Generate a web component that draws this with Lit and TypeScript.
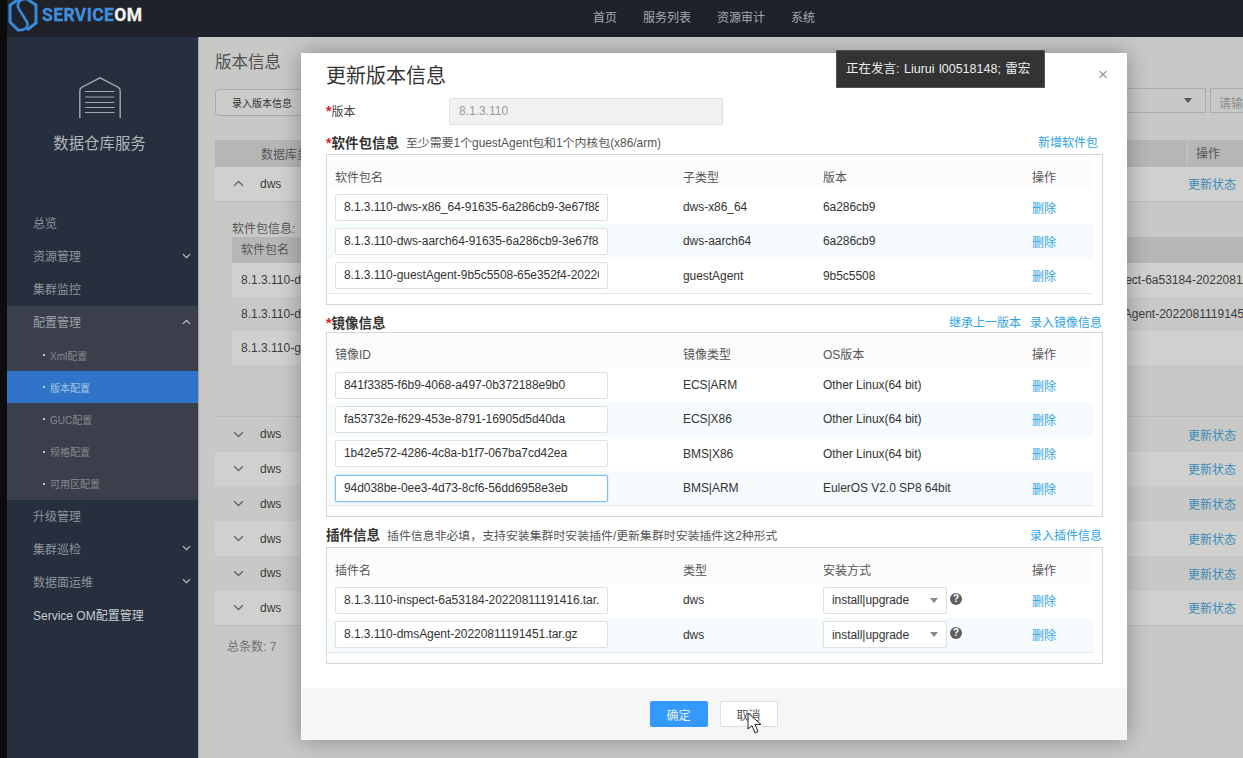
import { LitElement, html, css } from "lit";
import { customElement } from "lit/decorators.js";

const chevron = (up: boolean) => html`<svg class="chev" viewBox="0 0 10 6" width="9" height="6"><path d=${up ? "M1 5 L5 1.2 L9 5" : "M1 1 L5 4.8 L9 1"} fill="none" stroke="currentColor" stroke-width="1.3"/></svg>`;

const softRows = [
  ["8.1.3.110-dws-x86_64-91635-6a286cb9-3e67f88e-20220811191416.tar.gz", "dws-x86_64", "6a286cb9"],
  ["8.1.3.110-dws-aarch64-91635-6a286cb9-3e67f88e-20220811191416.tar.gz", "dws-aarch64", "6a286cb9"],
  ["8.1.3.110-guestAgent-9b5c5508-65e352f4-20220811191416.tar.gz", "guestAgent", "9b5c5508"],
];
const imageRows = [
  ["841f3385-f6b9-4068-a497-0b372188e9b0", "ECS|ARM", "Other Linux(64 bit)"],
  ["fa53732e-f629-453e-8791-16905d5d40da", "ECS|X86", "Other Linux(64 bit)"],
  ["1b42e572-4286-4c8a-b1f7-067ba7cd42ea", "BMS|X86", "Other Linux(64 bit)"],
  ["94d038be-0ee3-4d73-8cf6-56dd6958e3eb", "BMS|ARM", "EulerOS V2.0 SP8 64bit"],
];
const pluginRows = [
  ["8.1.3.110-inspect-6a53184-20220811191416.tar.gz", "dws"],
  ["8.1.3.110-dmsAgent-20220811191451.tar.gz", "dws"],
];

@customElement("app-root")
export class AppRoot extends LitElement {
  static styles = css`
    :host { display: block; width: 1243px; height: 758px; overflow: hidden; position: relative; background: #0c0c0c;
      font-family: "Liberation Sans", "Noto Sans CJK SC", sans-serif; font-size: 12px; color: #333; }
    .page { margin-left: 7px; height: 758px; display: flex; flex-direction: column; }
    .top { height: 37px; flex: none; background: #20222b; display: flex; align-items: center; position: relative; }
    .logo { display: flex; align-items: center; gap: 4px; width: 586px; flex: none; padding-left: 1px; box-sizing: border-box; height: 37px; }
    .brand { font: 700 17.5px/1 "Roboto", sans-serif; color: #3f8fdc; letter-spacing: 0.4px; margin-top: -6px; -webkit-text-stroke: 0.3px currentColor; }
    .brand b { color: #f2f2f2; font-weight: 700; }
    .logo svg { margin-top: -7px; flex: none; }
    .nav { display: flex; gap: 26px; color: #a7aab0; margin-top: -5px; }
    .main { flex: 1; display: flex; min-height: 0; }
    .side { width: 191px; flex: none; background: #262f3e; color: #8f949c; }
    .brandbox { height: 169px; display: flex; flex-direction: column; align-items: center; padding: 40px 6px 0 0; box-sizing: border-box; color: #b2b5b9; }
    .brandbox .name { font-size: 15.4px; margin-top: 16px; line-height: 20px; }
    .menu { padding-top: 1px; }
    .mi { height: 33px; display: flex; align-items: center; justify-content: space-between; padding: 0 7px 2px 26px; box-sizing: border-box; font-size: 12px; color: #8f949c; }
    .mi .chev { color: #c0c3c7; }
    .mi.open { color: #9da1a8; }
    .mi.bright { color: #c9cbce; }
    .group { background: #3a3f4b; }
    .si { height: 32.2px; display: flex; align-items: center; padding-left: 36px; font-size: 10px; color: #85898f; gap: 5px; }
    .si::before { content: ""; width: 2px; height: 2px; background: #c4c6c9; flex: none; }
    .si.on { background: #2f74c8; color: #a9c4e4; }
    .content { flex: 1; min-width: 0; background: #c8c9c7; padding-left: 16px; overflow: hidden; color: #444; border-left: 1px solid #9ea0a2; box-sizing: border-box; }
    .h1 { font-size: 16.5px; color: #505150; height: 52px; line-height: 51px; }
    .tools { display: flex; justify-content: space-between; height: 27px; }
    .addbtn { border: 1px solid #a9aaa8; border-radius: 4px; padding: 0 16px; display: flex; align-items: center; font-size: 10px; color: #333; background: #cbccca; }
    .tool-r { display: flex; gap: 4px; margin-right: -17px; margin-top: -1px; }
    .fsel { width: 80px; height: 25px; border: 1px solid #aeafad; display: flex; align-items: center; justify-content: flex-end; padding-right: 13px; box-sizing: border-box; }
    .tri { width: 0; height: 0; border: 4px solid transparent; border-top: 5px solid #555; border-bottom: 0; }
    .finp { width: 50px; height: 25px; border: 1px solid #aeafad; box-sizing: border-box; padding: 5px 8px; color: #8c8d8b; white-space: nowrap; overflow: hidden; }
    .thead { margin-top: 24px; height: 27px; background: #b6b7b5; display: flex; align-items: center; color: #555; }
    .thead .a { width: 46px; }
    .thead .f { flex: 1; }
    .thead .e { width: 56px; height: 27px; padding-left: 8px; box-sizing: border-box; line-height: 28px; border-left: 1px solid #c4c5c3; }
    .row { height: 34.8px; display: flex; align-items: center; box-sizing: border-box; color: #3c3c3c; }
    .row.lt { background: #d0d1cf; }
    .row.line { border-bottom: 1px solid #b9bab8; }
    .row .chev { margin-left: 18px; color: #666; width: 11px; height: 7px; }
    .row .n { margin-left: 16px; flex: 1; font-size: 12px; }
    .row .act { width: 55px; color: #3a89b8; font-size: 12px; }
    .sub { height: 215px; padding-left: 17px; box-sizing: border-box; padding-top: 18px; border-bottom: 1px solid #b9bab8; }
    .sub .cap { height: 17px; color: #555; line-height: 18px; }
    .sub .sh { height: 26px; background: #b6b7b5; padding-left: 9px; line-height: 26px; color: #555; }
    .sub .sr { height: 34px; display: flex; align-items: center; padding: 1px 0 0 9px; box-sizing: border-box; color: #3c3c3c; white-space: nowrap; overflow: hidden; }
    .sub .sr.lt { background: #d0d1cf; }
    .sub .sr .c1 { width: 809px; flex: none; }
    .sub .sr .back { margin-left: -2px; }
    .pager { padding: 11px 0 0 12px; color: #707170; }
    .modal { position: absolute; left: 301px; top: 53px; width: 826px; height: 687px; background: #fff; display: flex; flex-direction: column; box-shadow: 0 0 22px rgba(0,0,0,.32); border-radius: 1px; }
    .body { padding-left: 25px; box-sizing: border-box; width: 802px; }
    .title { height: 45px; font-size: 20px; line-height: 46px; color: #333; }
    .x { position: absolute; right: 19px; top: 13px; font-size: 17px; color: #9a9a9a; line-height: 18px; }
    .ver { height: 27px; display: flex; align-items: center; }
    .ver .lab { width: 123px; color: #444; margin-top: -2px; }
    .star { color: #e0202a; font-weight: 700; font-size: 14px; }
    .ver .inp { width: 274px; height: 27px; background: #f1f1f1; border: 1px solid #e0e0e0; border-radius: 2px; box-sizing: border-box; padding-left: 9px; line-height: 25px; color: #9a9a9a; }
    .sh1 { height: 23px; margin-top: 5px; padding-bottom: 1px; }
    .sh2 { height: 20px; padding-top: 7px; }
    .sh3 { height: 26px; padding-top: 4px; }
    .shead { display: flex; align-items: center; }
    .shead b { font-size: 13.5px; color: #333; margin-right: 7px; }
    .shead .note { font-size: 11.9px; color: #555; flex: 1; }
    .shead .links { display: flex; gap: 9px; color: #2ea3e6; padding-right: 1px; }
    .shead .links.pad { padding-right: 5px; }
    .box { border: 1px solid #d5d5d5; padding: 0 9px 10px 1px; width: 777px; box-sizing: border-box; }
    .hr { height: 35px; box-sizing: border-box; padding: 7px 0 0 7px; display: grid; grid-template-columns: 348px 140px 209px 1fr; align-items: center; color: #555; background: #fdfcfd; }
    .tr { height: 34.34px; display: grid; grid-template-columns: 348px 140px 209px 1fr; align-items: center; padding-left: 7px; color: #333; letter-spacing: -0.05px; }
    .tr.alt { background: #f6fbfe; }
    .rows { border-bottom: 1px solid #e4e8eb; }
    .cell { width: 273px; height: 27px; border: 1px solid #dfdfdf; border-radius: 2px; background: #fff; box-sizing: border-box; padding: 0 8px; line-height: 25px; overflow: hidden; white-space: nowrap; color: #333; }
    .cell span { display: block; overflow: hidden; }
    .cell.focus { border-color: #7dbdf3; box-shadow: 0 0 2px #a3d2f8; }
    .del { color: #2ea3e6; }
    .selw { display: flex; align-items: center; gap: 3px; }
    .sel { width: 124px; height: 27px; border: 1px solid #dfdfdf; border-radius: 2px; background: #fff; box-sizing: border-box; display: flex; align-items: center; justify-content: space-between; padding: 0 8px; }
    .sel .tri { border-top-color: #888; }
    .help { width: 12px; height: 12px; border-radius: 50%; background: #606060; color: #fff; font: 700 10px/12px "Liberation Sans", sans-serif; text-align: center; margin-top: -3px; }
    .foot { margin-top: auto; height: 52px; background: #f5f6f6; display: flex; justify-content: center; align-items: center; gap: 12px; padding-right: 1px; }
    .btn { width: 58px; height: 26px; border-radius: 2px; display: flex; align-items: center; justify-content: center; box-sizing: border-box; }
    .btn.pri { background: #3399fa; color: #e8f3fe; }
    .btn.def { background: #fff; border: 1px solid #dfdfdf; color: #555; }
    .speak { position: absolute; left: 836px; top: 50px; width: 209px; height: 38px; background: #333; border: 1px solid #555; box-sizing: border-box; color: #eee; font-size: 12.5px; word-spacing: 1px; line-height: 36px; padding-left: 9px; white-space: nowrap; }
    .cursor { position: absolute; left: 747px; top: 712px; }
  `;

  private renderBg() {
    const r = [0, 1, 2, 3, 4, 5];
    return html`<div class="content">
      <div class="h1">版本信息</div>
      <div class="tools">
        <div class="addbtn">录入版本信息</div>
        <div class="tool-r"><div class="fsel"><span class="tri"></span></div><div class="finp">请输入</div></div>
      </div>
      <div class="thead"><span class="a"></span><span class="f">数据库类型</span><span class="e">操作</span></div>
      <div class="row lt line">${chevron(true)}<span class="n">dws</span><span class="act">更新状态</span></div>
      <div class="sub">
        <div class="cap">软件包信息:</div>
        <div class="sh">软件包名</div>
        <div class="sr lt"><span class="c1">8.1.3.110-dws-x86_64</span><span>8.1.3.110-inspect-6a53184-20220811191416.tar.gz</span></div>
        <div class="sr"><span class="c1">8.1.3.110-dws-aarch64</span><span class="back">8.1.3.110-dmsAgent-20220811191451.tar.gz</span></div>
        <div class="sr lt"><span class="c1">8.1.3.110-guestAgent</span></div>
      </div>
      ${r.map((i) => html`<div class="row ${i % 2 ? "lt" : ""} ${i === 5 ? "line" : ""}">${chevron(false)}<span class="n">dws</span><span class="act">更新状态</span></div>`)}
      <div class="pager">总条数: 7</div>
    </div>`;
  }

  private renderSide() {
    return html`<aside class="side">
      <div class="brandbox">
        <svg width="42" height="41" viewBox="0 0 42 41" fill="none" stroke="#a3a6aa">
          <path d="M0.8 41 V14 Q0.8 11.5 3 10.2 L21 0.8 L39 10.2 Q41.2 11.5 41.2 14 V41" stroke-width="1.4"/>
          <path d="M6 14.5 H35.5 M6 20 H35.5 M6 25.5 H35.5 M6 30.5 H35.5 M6 35.5 H35.5" stroke-width="1"/>
        </svg>
        <div class="name">数据仓库服务</div>
      </div>
      <div class="menu">
        <div class="mi">总览</div>
        <div class="mi">资源管理${chevron(false)}</div>
        <div class="mi">集群监控</div>
        <div class="group">
          <div class="mi open">配置管理${chevron(true)}</div>
          <div class="si">Xml配置</div>
          <div class="si on">版本配置</div>
          <div class="si">GUC配置</div>
          <div class="si">规格配置</div>
          <div class="si">可用区配置</div>
        </div>
        <div class="mi">升级管理</div>
        <div class="mi">集群巡检${chevron(false)}</div>
        <div class="mi">数据面运维${chevron(false)}</div>
        <div class="mi bright">Service OM配置管理</div>
      </div>
    </aside>`;
  }

  private hr(a: string, b: string, c: string) {
    return html`<div class="hr"><span>${a}</span><span>${b}</span><span>${c}</span><span>操作</span></div>`;
  }

  private renderModal() {
    return html`<div class="modal">
      <div class="x">×</div>
      <div class="body">
        <div class="title">更新版本信息</div>
        <div class="ver"><div class="lab"><span class="star">*</span>版本</div><div class="inp">8.1.3.110</div></div>
        <div class="shead sh1"><b><span class="star">*</span>软件包信息</b><span class="note">至少需要1个guestAgent包和1个内核包(x86/arm)</span><span class="links pad">新增软件包</span></div>
        <div class="box">
          ${this.hr("软件包名", "子类型", "版本")}
          <div class="rows">
            ${softRows.map((r, i) => html`<div class="tr ${i % 2 ? "alt" : ""}"><div class="cell"><span>${r[0]}</span></div><span>${r[1]}</span><span>${r[2]}</span><span class="del">删除</span></div>`)}
          </div>
        </div>
        <div class="shead sh2"><b><span class="star">*</span>镜像信息</b><span class="note"></span><span class="links"><span>继承上一版本</span><span>录入镜像信息</span></span></div>
        <div class="box">
          ${this.hr("镜像ID", "镜像类型", "OS版本")}
          <div class="rows">
            ${imageRows.map((r, i) => html`<div class="tr ${i % 2 ? "alt" : ""}"><div class="cell ${i === 3 ? "focus" : ""}"><span>${r[0]}</span></div><span>${r[1]}</span><span>${r[2]}</span><span class="del">删除</span></div>`)}
          </div>
        </div>
        <div class="shead sh3"><b>插件信息</b><span class="note">插件信息非必填，支持安装集群时安装插件/更新集群时安装插件这2种形式</span><span class="links">录入插件信息</span></div>
        <div class="box">
          ${this.hr("插件名", "类型", "安装方式")}
          <div class="rows">
            ${pluginRows.map((r, i) => html`<div class="tr ${i % 2 ? "alt" : ""}"><div class="cell"><span>${r[0]}</span></div><span>${r[1]}</span><div class="selw"><div class="sel">install|upgrade<span class="tri"></span></div><span class="help">?</span></div><span class="del">删除</span></div>`)}
          </div>
        </div>
      </div>
      <div class="foot"><div class="btn pri">确定</div><div class="btn def">取消</div></div>
    </div>`;
  }

  render() {
    return html`<div class="page">
        <header class="top">
          <div class="logo">
            <svg width="30" height="36" viewBox="0 0 30 36" fill="none" stroke="#3a8bd6" stroke-width="3">
              <path d="M11 2 L2 8 V25 L10 33 M19 2 L28 8 V26 L19 33"/>
              <path d="M21 2 C11 1 8 7 11 12 L19 25 C21 30 17 34 9 33" stroke-width="2.6"/>
            </svg>
            <span class="brand">SERVICE<b>OM</b></span>
          </div>
          <nav class="nav"><span>首页</span><span>服务列表</span><span>资源审计</span><span>系统</span></nav>
        </header>
        <div class="main">${this.renderSide()}${this.renderBg()}</div>
      </div>
      ${this.renderModal()}
      <div class="speak">正在发言: Liurui l00518148; 雷宏</div>
      <svg class="cursor" width="16" height="23" viewBox="0 0 16 23"><path d="M1 1 L1 17 L5 13.5 L8 21 L11 19.5 L8 12.5 L14 12.5 Z" fill="#fff" stroke="#222" stroke-width="1"/></svg>`;
  }
}
